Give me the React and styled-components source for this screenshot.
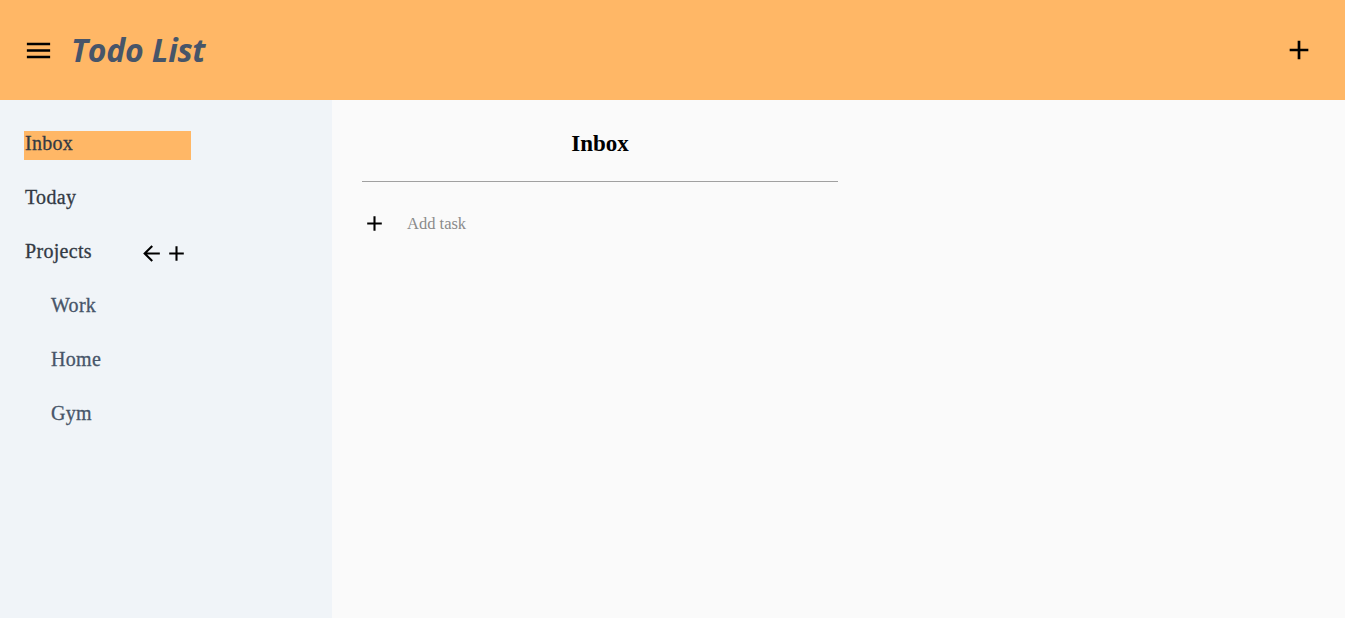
import React from "react";
import styled, { createGlobalStyle } from "styled-components";

const GlobalStyle = createGlobalStyle`
  body {
    margin: 0;
    font-family: "Liberation Serif", "Times New Roman", serif;
  }
`;

const Page = styled.div`
  display: flex;
  flex-direction: column;
  height: 100vh;
`;

const Header = styled.header`
  height: 100px;
  flex-shrink: 0;
  background-color: #ffb766;
  display: flex;
  align-items: center;
  justify-content: space-between;
  padding: 0 30px 0 23px;
`;

const Brand = styled.div`
  display: flex;
  align-items: center;
  gap: 17px;
`;

const Title = styled.h1`
  margin: 0 0 2px;
  font-family: "Open Sans", "Noto Sans", sans-serif;
  font-style: italic;
  font-weight: 700;
  font-size: 32px;
  letter-spacing: -0.2px;
  color: #475569;
`;

const IconButton = styled.span`
  display: flex;
  align-items: center;
  justify-content: center;
  width: ${({ size }) => size}px;
  height: ${({ size }) => size}px;
  cursor: pointer;
  color: #000;
`;

const Body = styled.div`
  flex: 1;
  display: flex;
`;

const Sidebar = styled.aside`
  width: 332px;
  background-color: #f0f4f8;
  padding: 31px 0 0 24px;
  box-sizing: border-box;
`;

const NavList = styled.ul`
  list-style: none;
  margin: 0;
  padding: 0;
  display: flex;
  flex-direction: column;
  gap: 25px;
`;

const NavItem = styled.li`
  width: 167px;
  height: 29px;
  display: flex;
  align-items: center;
  justify-content: space-between;
  box-sizing: border-box;
  padding: 0 2px 4px ${({ indent }) => (indent ? 27 : 1)}px;
  font-size: 20px;
  letter-spacing: 0.3px;
  -webkit-text-stroke: 0.3px currentColor;
  color: ${({ indent }) => (indent ? "#475569" : "#333a44")};
  background-color: ${({ active }) => (active ? "#ffb766" : "transparent")};
  cursor: pointer;
`;

const IconGroup = styled.div`
  display: flex;
  align-items: center;
  margin-top: 4px;
  -webkit-text-stroke: 0;
`;

const Main = styled.main`
  flex: 1;
  background-color: #fafafa;
  padding: 29px 30px 0;
`;

const Content = styled.section`
  width: 476px;
`;

const Heading = styled.h2`
  margin: 0;
  height: 28px;
  line-height: 30px;
  text-align: center;
  font-size: 23px;
  font-weight: 700;
  color: #000;
`;

const Divider = styled.hr`
  margin: 24px 0 0;
  border: none;
  border-top: 1px solid #a0a0a0;
`;

const AddTaskRow = styled.div`
  display: flex;
  align-items: center;
  gap: 20px;
  margin-top: 29px;
  cursor: pointer;
`;

const AddTaskText = styled.span`
  font-size: 16.5px;
  color: #8a8a8a;
`;

const MenuIcon = ({ size }) => (
  <svg width={size} height={size} viewBox="0 0 24 24" fill="currentColor">
    <path d="M3 18h18v-2H3v2zm0-5h18v-2H3v2zm0-7v2h18V6H3z" />
  </svg>
);

const AddIcon = ({ size }) => (
  <svg width={size} height={size} viewBox="0 0 24 24" fill="currentColor">
    <path d="M19 13h-6v6h-2v-6H5v-2h6V5h2v6h6v2z" />
  </svg>
);

const BackIcon = ({ size }) => (
  <svg width={size} height={size} viewBox="0 0 24 24" fill="currentColor">
    <path d="M20 11H7.83l5.59-5.59L12 4l-8 8 8 8 1.41-1.41L7.83 13H20v-2z" />
  </svg>
);

const projects = ["Work", "Home", "Gym"];

export default function App() {
  return (
    <>
      <GlobalStyle />
      <Page>
        <Header>
          <Brand>
            <IconButton size={31}>
              <MenuIcon size={31} />
            </IconButton>
            <Title>Todo List</Title>
          </Brand>
          <IconButton size={32}>
            <AddIcon size={32} />
          </IconButton>
        </Header>
        <Body>
          <Sidebar>
            <NavList>
              <NavItem active>Inbox</NavItem>
              <NavItem>Today</NavItem>
              <NavItem>
                Projects
                <IconGroup>
                  <IconButton size={25}>
                    <BackIcon size={25} />
                  </IconButton>
                  <IconButton size={25}>
                    <AddIcon size={25} />
                  </IconButton>
                </IconGroup>
              </NavItem>
              {projects.map((p) => (
                <NavItem key={p} indent>
                  {p}
                </NavItem>
              ))}
            </NavList>
          </Sidebar>
          <Main>
            <Content>
              <Heading>Inbox</Heading>
              <Divider />
              <AddTaskRow>
                <IconButton size={25}>
                  <AddIcon size={25} />
                </IconButton>
                <AddTaskText>Add task</AddTaskText>
              </AddTaskRow>
            </Content>
          </Main>
        </Body>
      </Page>
    </>
  );
}
